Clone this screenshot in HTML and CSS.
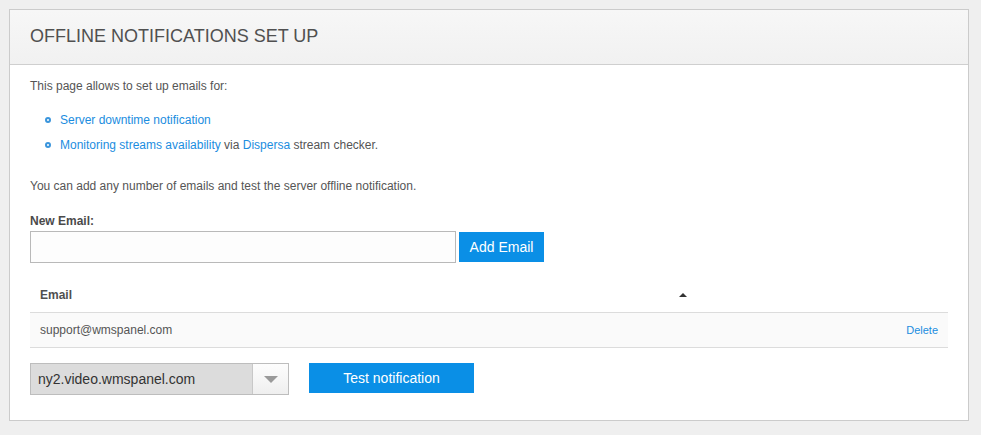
FILE: index.html
```html
<!DOCTYPE html>
<html>
<head>
<meta charset="utf-8">
<link rel="stylesheet" href="styles.css">
</head>
<body>
<div class="panel">
  <div class="panel-head"><h1 class="title">OFFLINE NOTIFICATIONS SET UP</h1></div>
  <div class="panel-body">
    <p class="intro">This page allows to set up emails for:</p>
    <ul class="features">
      <li><span class="dot"></span><span><a class="link">Server downtime notification</a></span></li>
      <li><span class="dot"></span><span><a class="link">Monitoring streams availability</a> via <a class="link">Dispersa</a> stream checker.</span></li>
    </ul>
    <p class="note">You can add any number of emails and test the server offline notification.</p>
    <label class="field-label">New Email:</label>
    <div class="add-row">
      <input class="email-input" type="text">
      <button class="btn btn-add">Add Email</button>
    </div>
    <div class="table">
      <div class="t-head">
        <div class="th th-email">Email<span class="sort"></span></div>
        <div class="th"></div>
      </div>
      <div class="t-row">
        <div class="td">support@wmspanel.com</div>
        <div class="td td-action"><a class="link small">Delete</a></div>
      </div>
    </div>
    <div class="bottom-row">
      <div class="select">
        <span class="select-value">ny2.video.wmspanel.com</span>
        <span class="select-arrow"><span class="caret"></span></span>
      </div>
      <button class="btn btn-test">Test notification</button>
    </div>
  </div>
</div>
</body>
</html>
```
FILE: styles.css
```css
* { box-sizing: border-box; }
html, body { margin: 0; }
body {
  background: #efefef;
  padding: 9px 12px 9px 9px;
  font-family: "Liberation Sans", Arial, sans-serif;
  color: #555;
}
.panel {
  width: 960px;
  background: #fff;
  border: 1px solid #cbcbcb;
}
.panel-head {
  height: 55px;
  background: linear-gradient(#f7f7f7, #f1f1f1);
  border-bottom: 1px solid #cfcfcf;
  display: flex;
  align-items: center;
  padding: 0 20px 2px;
}
.title {
  margin: 0;
  font-size: 18px;
  font-weight: normal;
  color: #505050;
}
.panel-body {
  padding: 11px 20px 25px;
  font-size: 12px;
  line-height: 18px;
}
.intro, .note { margin: 0; padding-top: 1px; height: 18px; }
.features {
  list-style: none;
  margin: 16px 0 23px;
  padding: 0 0 0 15px;
}
.features li {
  display: flex;
  align-items: center;
  margin-bottom: 7px;
  padding-top: 1px;
  height: 18px;
}
.features li:last-child { margin-bottom: 0; }
.dot {
  width: 6px;
  height: 6px;
  border: 2px solid #3a95dc;
  border-radius: 50%;
  margin-right: 9px;
  flex: none;
}
.link { color: #1b8de0; text-decoration: none; }
.small { font-size: 11px; }
.field-label {
  display: block;
  margin-top: 17px;
  font-weight: bold;
  color: #4a4a4a;
  padding-top: 1px;
  height: 18px;
}
.add-row {
  display: flex;
  align-items: center;
  gap: 3px;
  margin-top: 2px;
}
.email-input {
  width: 426px;
  height: 32px;
  border: 1px solid #b9b9b9;
  background: #fdfdfd;
  margin: 0;
}
.btn {
  border: none;
  background: #0a8fe6;
  color: #fff;
  font-family: "Liberation Sans", Arial, sans-serif;
  font-size: 14px;
  padding: 0;
  margin: 0;
}
.btn-add { width: 85px; height: 30px; }
.table { margin-top: 15px; width: 918px; }
.t-head, .t-row {
  display: grid;
  grid-template-columns: 665px 1fr;
  height: 35px;
  align-items: center;
  border-bottom: 1px solid #dcdcdc;
}
.t-row { background: #fafafa; }
.th { font-weight: bold; padding-left: 10px; color: #4f4f4f; }
.th-email { position: relative; }
.sort {
  position: absolute;
  right: 8px;
  top: 7px;
  width: 0; height: 0;
  border-left: 4px solid transparent;
  border-right: 4px solid transparent;
  border-bottom: 4px solid #333;
}
.td { padding-left: 10px; }
.td-action { text-align: right; padding-right: 10px; }
.bottom-row {
  display: flex;
  align-items: center;
  gap: 20px;
  margin-top: 15px;
}
.select {
  width: 259px;
  height: 32px;
  display: flex;
  border: 1px solid #bdbdbd;
  background: #dcdcdc;
}
.select-value {
  flex: 1;
  padding-left: 7px;
  font-size: 14px;
  line-height: 30px;
  color: #333;
}
.select-arrow {
  width: 36px;
  border-left: 1px solid #c8c8c8;
  background: linear-gradient(#fdfdfd, #efefef);
  display: flex;
  align-items: center;
  justify-content: center;
}
.caret {
  width: 0; height: 0;
  border-left: 7px solid transparent;
  border-right: 7px solid transparent;
  border-top: 7px solid #9a9a9a;
}
.btn-test { width: 165px; height: 30px; margin-top: -2px; }
```
